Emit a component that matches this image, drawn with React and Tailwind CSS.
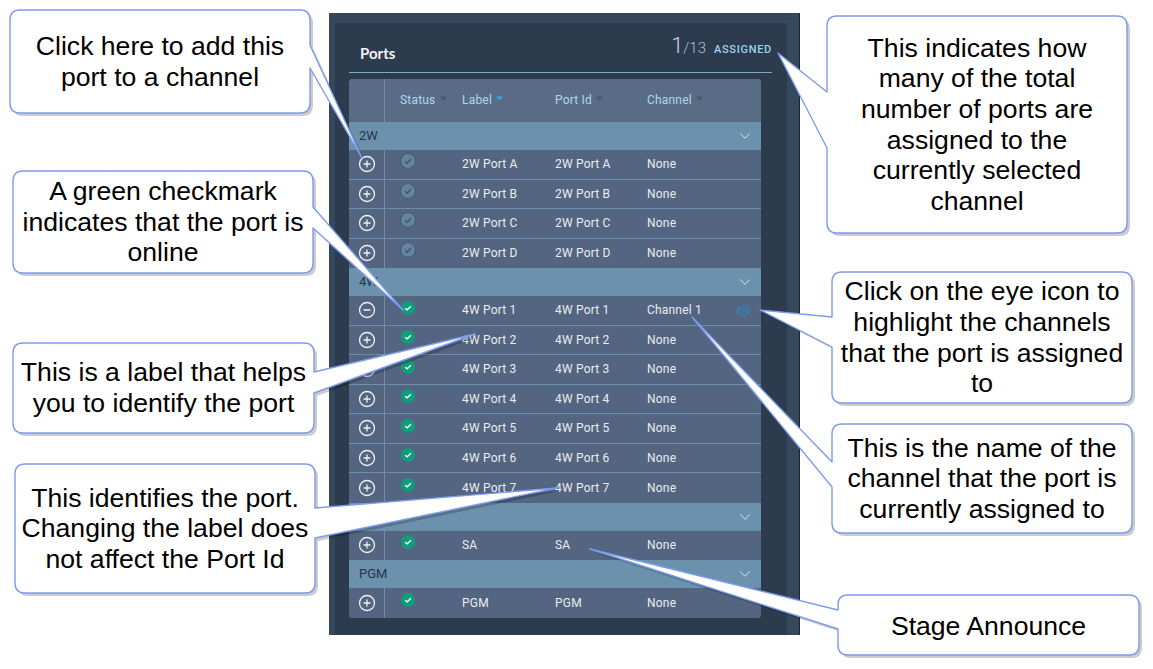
import { CirclePlus, CircleMinus, ChevronDown } from "lucide-react";

const callouts = [
  { x: 10, y: 10, w: 300, h: 103, tail: [[310, 45], [362, 158], [310, 68]], lines: ["Click here to add this", "port to a channel"] },
  { x: 13, y: 171, w: 300, h: 102, tail: [[313, 207], [403, 310], [313, 228]], lines: ["A green checkmark", "indicates that the port is", "online"] },
  { x: 13, y: 343, w: 301, h: 90, tail: [[314, 372], [475, 334], [314, 393]], lines: ["This is a label that helps", "you to identify the port"] },
  { x: 15, y: 464, w: 300, h: 129, tail: [[315, 508], [557, 488], [315, 538]], lines: ["This identifies the port.", "Changing the label does", "not affect the Port Id"] },
  { x: 827, y: 16, w: 300, h: 217, tail: [[827, 92], [778, 53], [827, 148]], lines: ["This indicates how", "many of the total", "number of ports are", "assigned to the", "currently selected", "channel"] },
  { x: 832, y: 272, w: 300, h: 131, tail: [[832, 317], [760, 310], [832, 347]], lines: ["Click on the eye icon to", "highlight the channels", "that the port is assigned", "to"] },
  { x: 832, y: 424, w: 300, h: 109, tail: [[832, 462], [692, 317], [832, 487]], lines: ["This is the name of the", "channel that the port is", "currently assigned to"] },
  { x: 838, y: 595, w: 301, h: 60, tail: [[838, 610], [590, 549], [838, 629]], lines: ["Stage Announce"], pad: "pt-[2px]" },
];

function calloutPath({ x, y, w, h, tail }) {
  const r = 10;
  const right = tail[0][0] === x + w;
  const t = tail.map((p) => p.join(" "));
  return [
    `M${x + r} ${y}H${x + w - r}Q${x + w} ${y} ${x + w} ${y + r}`,
    right ? `L${t[0]}L${t[1]}L${t[2]}` : "",
    `V${y + h - r}Q${x + w} ${y + h} ${x + w - r} ${y + h}H${x + r}Q${x} ${y + h} ${x} ${y + h - r}`,
    right ? "" : `L${t[2]}L${t[1]}L${t[0]}`,
    `V${y + r}Q${x} ${y} ${x + r} ${y}Z`,
  ].join("");
}

const groups = [
  { name: "2W", rows: ["2W Port A", "2W Port B", "2W Port C", "2W Port D"], offline: true },
  { name: "4W", rows: ["4W Port 1", "4W Port 2", "4W Port 3", "4W Port 4", "4W Port 5", "4W Port 6", "4W Port 7"] },
  { name: "SA", rows: ["SA"] },
  { name: "PGM", rows: ["PGM"] },
];

function Caret({ active }) {
  return (
    <svg width="7" height="5" viewBox="0 0 7 5" className="mb-[3px] ml-[4px]">
      <path d="M0 0.5H7L3.5 4.5Z" fill={active ? "#38a9e4" : "#46566c"} />
    </svg>
  );
}

function Status({ offline }) {
  if (offline) {
    return (
      <span className="flex h-4 w-4 items-center justify-center rounded-full border border-[#43566c] bg-[#64849e]">
        <svg width="10" height="10" viewBox="0 0 10 10" fill="none" stroke="#3f5369" strokeWidth="1.3"><path d="M2 5.3L4.2 7.3L8 3" /></svg>
      </span>
    );
  }
  return (
    <span className="mt-[1.5px] flex h-[14px] w-[14px] items-center justify-center rounded-full bg-[#0f9d7c]">
      <svg width="10" height="10" viewBox="0 0 10 10" fill="none" stroke="#ffffff" strokeWidth="1.4"><path d="M2.2 5.2L4.2 6.9L7.8 3.2" /></svg>
    </span>
  );
}

function Row({ label, offline, assigned, last }) {
  const Icon = assigned ? CircleMinus : CirclePlus;
  return (
    <div className={`flex h-[29.5px] items-stretch bg-[#536580] ${last ? "" : "border-b border-[#6d90a9]"}`}>
      <div className="flex w-[36px] items-center justify-center border-r border-[#6d90a9]">
        <Icon size={18} strokeWidth={1.7} color="#eef2f5" />
      </div>
      <div className="flex w-[77px] justify-start pl-[15px] pt-[3px]">
        <div className="flex w-4 justify-center self-start"><Status offline={offline} /></div>
      </div>
      <div className="flex w-[93px] items-center">{label}</div>
      <div className="flex w-[92px] items-center">{label}</div>
      <div className="flex flex-1 items-center">{assigned ? "Channel 1" : "None"}</div>
      {assigned && (
        <div className="flex items-center pr-[9px]">
          <svg width="17" height="17" viewBox="0 0 24 24" fill="#3a7ca6">
            <path d="M12 4.5C7 4.5 2.7 7.6 1 12c1.7 4.4 6 7.5 11 7.5s9.3-3.1 11-7.5c-1.7-4.4-6-7.5-11-7.5zM12 17a5 5 0 110-10 5 5 0 010 10zm0-8a3 3 0 100 6 3 3 0 000-6z" />
          </svg>
        </div>
      )}
    </div>
  );
}

export default function App() {
  return (
    <div className="relative h-[669px] w-[1153px] overflow-hidden bg-white font-['Roboto',sans-serif]">
      <div className="ml-[329px] pt-[13px]">
        <div className="h-[622px] w-[471px] border-r border-[#1c2430] bg-[#36485c] pt-[10px] pl-[6px] pr-[12px]">
          <div className="h-[612px] rounded-t-[3px] bg-[#2d3b4e] pl-[14px] pr-[15px]">
            <div className="flex h-[50px] items-end justify-between border-b border-[#7fa9c2] pb-[10px]">
              <span className="pl-[11px] font-['Lato',sans-serif] text-[15px] font-bold leading-[18px] text-[#f2f4f6]">Ports</span>
              <span className="flex items-baseline font-light text-[#a9c6d8]">
                <span className="text-[22px] leading-[24px] text-[#c4d6e2]">1</span>
                <span className="text-[15px] leading-[24px]">/13</span>
                <span className="ml-[8px] text-[11px] font-medium leading-[24px] tracking-[0.7px] text-[#9fd0ea]">ASSIGNED</span>
              </span>
            </div>
            <div className="mt-[6px] w-[412px] overflow-hidden rounded-[3px] text-[12px] leading-[14px] tracking-[0.2px] text-[#e9edf1]">
              <div className="flex h-[43px] bg-[#5a6c85] pb-[2px] text-[#aed7ed]">
                <div className="-mb-[2px] w-[36px] border-r border-[#6d90a9]" />
                <div className="flex w-[77px] items-center pl-[15px]">Status<Caret /></div>
                <div className="flex w-[93px] items-center">Label<Caret active /></div>
                <div className="flex w-[92px] items-center">Port Id<Caret /></div>
                <div className="flex flex-1 items-center">Channel<Caret /></div>
              </div>
              {groups.map((g) => (
                <div key={g.name}>
                  <div className="flex h-[28px] items-center justify-between bg-[#6b91ad] pl-[10px] pr-[7px] text-[13px] tracking-normal text-[#26344a]">
                    <span>{g.name}</span>
                    <ChevronDown size={18} strokeWidth={1.2} color="#e6eef3" />
                  </div>
                  {g.rows.map((r, i) => (
                    <Row key={r} label={r} offline={g.offline} assigned={r === "4W Port 1"} last={i === g.rows.length - 1} />
                  ))}
                </div>
              ))}
            </div>
          </div>
        </div>
      </div>

      <svg className="pointer-events-none absolute left-0 top-0" width="1153" height="669" viewBox="0 0 1153 669">
        {callouts.map((c, i) => (
          <path key={i} d={calloutPath(c)} transform="translate(3 3)" fill="#000000" fillOpacity="0.2" />
        ))}
        {callouts.map((c, i) => (
          <path key={i} d={calloutPath(c)} fill="#ffffff" stroke="#7e9cec" strokeWidth="1.4" strokeLinejoin="round" />
        ))}
      </svg>

      {callouts.map((c, i) => (
        <div
          key={i}
          style={{ left: c.x, top: c.y, width: c.w, height: c.h }}
          className={`absolute flex flex-col items-center justify-center text-center font-['Liberation_Sans',Arial,sans-serif] text-[26.6px] leading-[30.6px] text-black ${c.pad || ""}`}
        >
          {c.lines.map((l) => (
            <div key={l} className="whitespace-nowrap">{l}</div>
          ))}
        </div>
      ))}
    </div>
  );
}
